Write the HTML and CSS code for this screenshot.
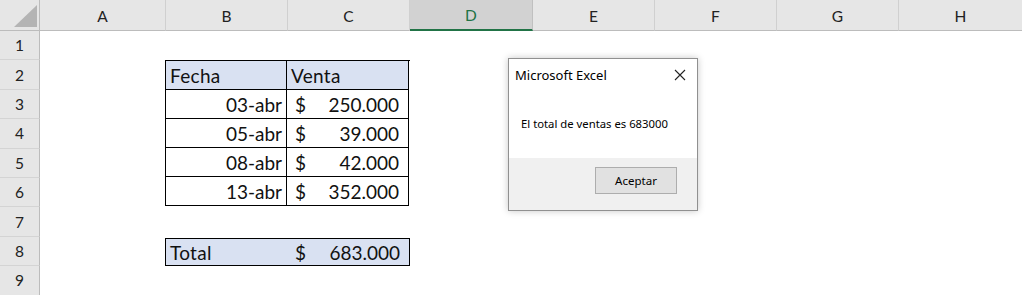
FILE: index.html
```html
<!DOCTYPE html>
<html lang="es">
<head>
  <meta charset="UTF-8">
  <title>Ventas - Excel</title>
  <link rel="stylesheet" href="styles.css">
</head>
<body>
  <div class="sheet">
    <!-- column headers -->
    <div class="corner">
      <svg width="40" height="30" viewBox="0 0 40 30"><polygon points="14,27 37,27 37,5" fill="#b4b4b4"/></svg>
    </div>
    <div class="col-head">A</div>
    <div class="col-head">B</div>
    <div class="col-head">C</div>
    <div class="col-head selected">D</div>
    <div class="col-head">E</div>
    <div class="col-head">F</div>
    <div class="col-head">G</div>
    <div class="col-head last">H</div>

    <!-- row headers -->
    <div class="row-head r1">1</div>
    <div class="row-head r2">2</div>
    <div class="row-head r3">3</div>
    <div class="row-head r4">4</div>
    <div class="row-head r5">5</div>
    <div class="row-head r6">6</div>
    <div class="row-head r7">7</div>
    <div class="row-head r8">8</div>
    <div class="row-head r9">9</div>

    <!-- sales table B2:C6 -->
    <div class="sales">
      <div class="cell head">Fecha</div>
      <div class="cell head">Venta</div>
      <div class="cell date">03-abr</div>
      <div class="cell money"><span>$</span><span>250.000</span></div>
      <div class="cell date">05-abr</div>
      <div class="cell money"><span>$</span><span>39.000</span></div>
      <div class="cell date">08-abr</div>
      <div class="cell money"><span>$</span><span>42.000</span></div>
      <div class="cell date">13-abr</div>
      <div class="cell money"><span>$</span><span>352.000</span></div>
    </div>

    <!-- total B8:C8 -->
    <div class="total">
      <div class="cell label">Total</div>
      <div class="cell money"><span>$</span><span>683.000</span></div>
    </div>
  </div>

  <!-- message box -->
  <div class="msgbox">
    <div class="msg-title">
      <span>Microsoft Excel</span>
      <svg class="msg-close" width="12" height="12" viewBox="0 0 12 12"><path d="M1 1 L11 11 M11 1 L1 11" stroke="#222" stroke-width="1.1" fill="none"/></svg>
    </div>
    <div class="msg-body">El total de ventas es 683000</div>
    <div class="msg-foot">
      <button class="msg-btn">Aceptar</button>
    </div>
  </div>
</body>
</html>
```

FILE: styles.css
```css
/* Excel sheet look */
body {
  margin: 0;
  background: #fff;
  overflow: hidden;
  font-family: Lato, "Open Sans", sans-serif;
}
.sheet {
  display: grid;
  grid-template-columns: 40px 126px 122px 122px 123px 122px 122px 122px 123px;
  grid-template-rows: 31px repeat(9, 29.4px);
  width: 1022px;
}
.corner {
  grid-column: 1;
  grid-row: 1;
  background: #e6e6e6;
  border-right: 1px solid #bcbcbc;
  border-bottom: 1px solid #bcbcbc;
  box-sizing: border-box;
}
.corner svg {
  display: block;
}
.col-head {
  grid-row: 1;
  background: #e6e6e6;
  border-right: 1px solid #d0d0d0;
  border-bottom: 1px solid #bcbcbc;
  box-sizing: border-box;
  display: flex;
  align-items: center;
  justify-content: center;
  font-size: 15.5px;
  color: #222;
  padding-top: 1px;
}
.col-head.selected {
  background: #d2d2d2;
  color: #217346;
  border-bottom: 2px solid #217346;
  border-right-color: #c0c0c0;
}
.col-head.last {
  border-right: none;
}
.row-head {
  grid-column: 1;
  background: #e6e6e6;
  border-right: 1px solid #bcbcbc;
  border-bottom: 1px solid #d4d4d4;
  box-sizing: border-box;
  display: flex;
  align-items: center;
  justify-content: center;
  font-size: 15.5px;
  color: #222;
}
.r1 { grid-row: 2; }
.r2 { grid-row: 3; }
.r3 { grid-row: 4; }
.r4 { grid-row: 5; }
.r5 { grid-row: 6; }
.r6 { grid-row: 7; }
.r7 { grid-row: 8; }
.r8 { grid-row: 9; }
.r9 { grid-row: 10; }

/* data */
.sales {
  grid-column: 3 / 5;
  grid-row: 3 / 8;
  display: grid;
  grid-template-columns: 121px 122px;
  grid-template-rows: repeat(5, 1fr);
  border-left: 1px solid #000;
  border-top: 1px solid #000;
  margin-left: -1px;
  margin-bottom: 1px;
}
.cell {
  border-right: 1px solid #000;
  border-bottom: 1px solid #000;
  display: flex;
  align-items: center;
  font-size: 19px;
  color: #111;
  white-space: nowrap;
  padding-top: 1px;
}
.cell.head {
  background: #d9e1f2;
  padding-left: 4px;
  letter-spacing: 0.3px;
}
.cell.date {
  justify-content: flex-end;
  padding-right: 4px;
}
.cell.money {
  justify-content: space-between;
  padding: 1px 9px 0 8px;
}
.total {
  grid-column: 3 / 5;
  grid-row: 9;
  display: grid;
  grid-template-columns: 121px 122px;
  border: 1px solid #000;
  margin-left: -1px;
  margin-top: 1px;
  background: #d9e1f2;
}
.total .cell {
  border: none;
}
.cell.label {
  padding-left: 4px;
  letter-spacing: 0.3px;
}

/* message box */
.msgbox {
  position: absolute;
  left: 508px;
  top: 58px;
  width: 190px;
  height: 153px;
  box-sizing: border-box;
  border: 1px solid #909090;
  background: #fff;
  box-shadow: 0 0 7px rgba(0, 0, 0, 0.22);
  display: flex;
  flex-direction: column;
  font-family: "Noto Sans", "Open Sans", sans-serif;
  font-size: 11.3px;
  color: #000;
}
.msg-title {
  height: 32px;
  display: flex;
  align-items: center;
  justify-content: space-between;
  padding: 0 11px 0 6px;
  font-size: 13px;
}
.msg-close {
  display: block;
}
.msg-body {
  flex: 1;
  padding: 25px 0 0 12px;
}
.msg-foot {
  height: 52px;
  background: #f0f0f0;
  display: flex;
  justify-content: flex-end;
  align-items: flex-start;
  padding: 9px 20px 0 0;
  box-sizing: border-box;
}
.msg-btn {
  width: 82px;
  height: 27px;
  background: #e1e1e1;
  border: 1px solid #adadad;
  font-family: "Noto Sans", "Open Sans", sans-serif;
  font-size: 11.5px;
  color: #000;
  padding: 0;
}
```
